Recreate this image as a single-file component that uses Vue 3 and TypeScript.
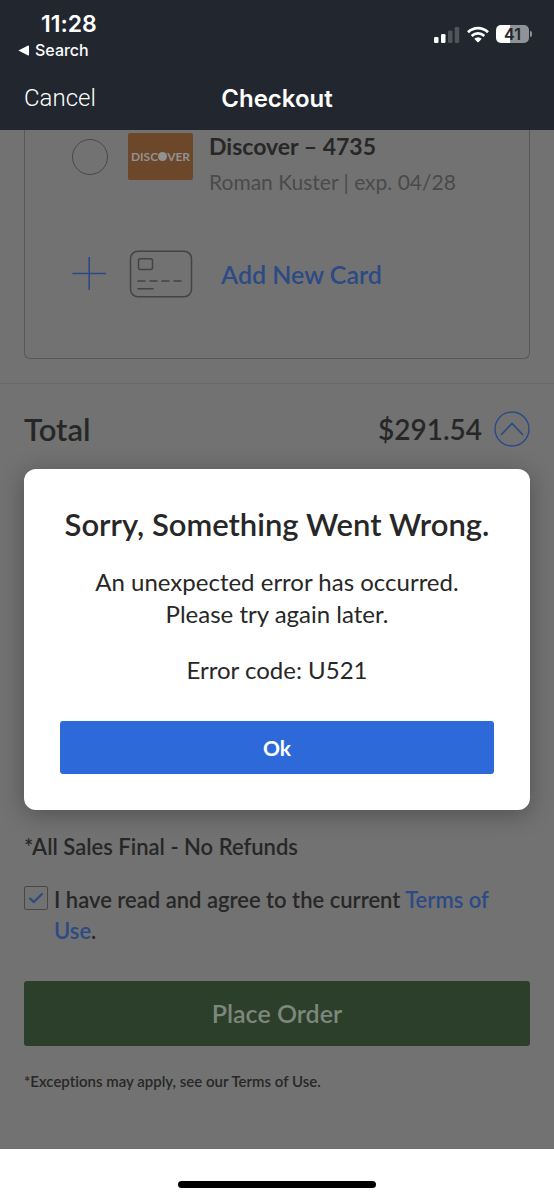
<script setup lang="ts">
import { ref } from 'vue'

const total = '$291.54'
const errorCode = 'U521'
const cardSelected = ref(false)
const agreed = ref(true)
const dialogOpen = ref(true)
</script>

<template>
  <div class="app">
    <header class="top">
      <div class="status">
        <div class="status-left">
          <span class="time">11:28</span>
          <a class="back" href="#">
            <svg width="11" height="11" viewBox="0 0 11 11" aria-hidden="true">
              <path d="M0.4 5.5 L10.2 0.6 Q11 0.4 11 1.2 V9.8 Q11 10.6 10.2 10.4 Z" fill="#fff" />
            </svg>
            <span>Search</span>
          </a>
        </div>
        <div class="status-right">
          <svg width="27" height="17" viewBox="0 0 27 17" aria-hidden="true">
            <rect x="1" y="11" width="4.500" height="6" rx="1.3" fill="#fff" />
            <rect x="8" y="8" width="4.500" height="9" rx="1.3" fill="#fff" />
            <rect x="15" y="4.500" width="4.500" height="12.500" rx="1.300" fill="#50545a" />
            <rect x="21.700" y="1" width="4.500" height="16" rx="1.300" fill="#50545a" />
          </svg>
          <svg width="22" height="17" viewBox="0 0 22 17" aria-hidden="true">
            <g fill="none" stroke="#fff" stroke-width="2.700">
              <path d="M1 6.200 A14.200 14.200 0 0 1 21 6.200" />
              <path d="M4.700 10 A9 9 0 0 1 17.300 10" />
            </g>
            <path d="M7.300 12.800 A5.300 5.300 0 0 1 14.700 12.800 L11.700 16 Q11 16.700 10.300 16 Z" fill="#fff" />
          </svg>
          <span class="battery"><span class="cell">41</span><span class="nub"></span></span>
        </div>
      </div>
      <div class="nav">
        <button class="cancel" type="button">Cancel</button>
        <h1>Checkout</h1>
      </div>
    </header>

    <main class="page">
      <section class="cards">
        <label class="card-row">
          <input v-model="cardSelected" type="radio" name="card" :value="true" />
          <span class="discover">DISC<i></i>VER</span>
          <span class="card-text">
            <strong>Discover – 4735</strong>
            <span>Roman Kuster | exp. 04/28</span>
          </span>
        </label>
        <button class="add-row" type="button">
          <svg width="36" height="36" viewBox="0 0 36 36" aria-hidden="true">
            <path d="M0.500 17.500 H34 M17.200 1 V34" fill="none" stroke="#2c4a84" stroke-width="1.600" />
          </svg>
          <svg width="64" height="48" viewBox="0 0 64 48" aria-hidden="true">
            <g fill="none" stroke="#434343" stroke-width="1.500">
              <rect x="1.500" y="1.200" width="61" height="45.600" rx="7.500" />
              <rect x="9.500" y="8.800" width="14" height="10.700" rx="2" />
              <path d="M9 31 H16 M21 31 H28 M33 31 H40 M45 31 H52 M9 38.800 H24" stroke-linecap="round" />
            </g>
          </svg>
          <span>Add New Card</span>
        </button>
      </section>

      <section class="total">
        <h2>Total</h2>
        <span class="amount">{{ total }}</span>
        <button type="button" aria-label="Show price details">
          <svg width="36" height="36" viewBox="0 0 36 36" aria-hidden="true">
            <g fill="none" stroke="#2c4a84" stroke-width="1.400">
              <circle cx="18" cy="18" r="17" />
              <path d="M7 24 L18 12.500 L29 24" stroke-width="1.700" />
            </g>
          </svg>
        </button>
      </section>

      <section class="agreement">
        <p class="final">*All Sales Final - No Refunds</p>
        <div class="agree">
          <span class="tick">
            <input id="agree" v-model="agreed" type="checkbox" />
            <svg v-if="agreed" width="16" height="12" viewBox="0 0 16 12" aria-hidden="true">
              <path d="M1.500 6 L5.800 10 L14.500 1.500" fill="none" stroke="#2c4a84" stroke-width="2.200" />
            </svg>
          </span>
          <label for="agree">I have read and agree to the current <a href="#">Terms of Use</a>.</label>
        </div>
        <button class="place" type="button">Place Order</button>
        <p class="note">*Exceptions may apply, see our Terms of Use.</p>
      </section>

      <div v-if="dialogOpen" class="layer">
        <div class="dialog" role="alertdialog" aria-modal="true" aria-labelledby="dialog-title">
          <h2 id="dialog-title">Sorry, Something Went Wrong.</h2>
          <p>An unexpected error has occurred.<br />Please try again later.</p>
          <p>Error code: {{ errorCode }}</p>
          <button type="button" @click="dialogOpen = false">Ok</button>
        </div>
      </div>
    </main>

    <footer class="home"><span></span></footer>
  </div>
</template>

<style>
body {
  margin: 0;
}
</style>

<style scoped>
* {
  box-sizing: border-box;
}
.app {
  --ink: #272727;
  --blue: #2c4a84;
  --line: #585858;
  min-height: 100vh;
  display: flex;
  flex-direction: column;
  font-family: Lato, "Noto Sans", sans-serif;
  font-variant-ligatures: none;
  color: var(--ink);
  background: #fff;
}
button {
  font: inherit;
  color: inherit;
  background: none;
  border: 0;
  padding: 0;
  cursor: pointer;
}
h1,
h2,
p {
  margin: 0;
}
svg {
  display: block;
  flex: none;
}
a {
  text-decoration: none;
}
.top {
  background: #22262e;
  color: #fff;
  font-family: Inter, sans-serif;
}
.status {
  display: flex;
  justify-content: space-between;
  height: 66px;
  padding: 10px 22px 0 18px;
}
.status-left {
  display: flex;
  flex-direction: column;
}
.time {
  padding-left: 23px;
  font-size: 23px;
  line-height: 28px;
  font-weight: 600;
}
.back {
  display: flex;
  align-items: center;
  gap: 6px;
  font-size: 16px;
  line-height: 24px;
  font-weight: 500;
  color: #fff;
}
.status-right {
  display: flex;
  align-items: center;
  gap: 7px;
  height: 48px;
}
.battery {
  display: flex;
  align-items: center;
  gap: 1px;
}
.cell {
  width: 33px;
  height: 18px;
  border-radius: 5px;
  background: linear-gradient(90deg, #fff 41%, #909295 41%);
  color: #22262e;
  font-size: 16px;
  line-height: 18px;
  font-weight: 600;
  text-align: center;
}
.nub {
  width: 2px;
  height: 6px;
  border-radius: 0 2px 2px 0;
  background: #909295;
}
.nav {
  display: grid;
  grid-template-columns: 1fr auto 1fr;
  align-items: center;
  height: 64px;
  padding: 0 24px;
}
.cancel {
  justify-self: start;
  font-family: Roboto, sans-serif;
  font-size: 24px;
  font-weight: 300;
}
.nav h1 {
  font-size: 24px;
  font-weight: 600;
}
.page {
  position: relative;
  flex: 1;
  background: #727272;
}
.cards {
  margin: 0 24px;
  padding: 0 47px 60px;
  border: 1px solid var(--line);
  border-top: 0;
  border-radius: 0 0 6px 6px;
}
.card-row {
  display: flex;
  height: 68px;
  padding-top: 3px;
}
.card-row input {
  appearance: none;
  flex: none;
  width: 36px;
  height: 36px;
  margin: 6px 20px 0 0;
  border: 1px solid #484848;
  border-radius: 50%;
}
.discover {
  display: flex;
  flex: none;
  align-items: center;
  justify-content: center;
  width: 65px;
  height: 47px;
  margin-right: 16px;
  border-radius: 2px;
  background: #6d4729;
  color: #929292;
  font-size: 12px;
  font-weight: 700;
}
.discover i {
  width: 9px;
  height: 9px;
  border-radius: 50%;
  background: #929292;
}
.card-text {
  display: flex;
  flex-direction: column;
  gap: 10px;
  font-size: 21px;
  line-height: 26px;
  color: #4a4a4a;
  white-space: nowrap;
}
.card-text strong {
  font-size: 23px;
  color: var(--ink);
}
.add-row {
  display: flex;
  align-items: center;
  width: 100%;
  height: 48px;
  margin-top: 52px;
  font-size: 25px;
  font-weight: 600;
  color: var(--blue);
}
.add-row svg + svg {
  margin: 0 28px 0 21px;
}
.total {
  display: flex;
  align-items: center;
  height: 91px;
  margin-top: 24px;
  padding: 0 24px;
  border-top: 1px solid #686868;
  font-size: 28px;
}
.total h2 {
  flex: 1;
  font-size: 31px;
  font-weight: 600;
}
.amount {
  margin-right: 12px;
  font-weight: 600;
}
.agreement {
  padding: 357px 24px 52px;
  font-size: 22px;
  line-height: 31px;
  font-weight: 600;
}
.agree {
  display: flex;
  gap: 6px;
  margin-top: 22px;
}
.tick {
  display: grid;
  flex: none;
  place-items: center;
  width: 24px;
  height: 28px;
}
.tick > * {
  grid-area: 1 / 1;
}
.tick input {
  appearance: none;
  width: 24px;
  height: 24px;
  margin: 0;
  border: 1px solid #484848;
  border-radius: 2px;
}
.tick svg {
  pointer-events: none;
}
.agree a {
  color: var(--blue);
}
.place {
  width: 100%;
  height: 65px;
  margin-top: 35px;
  border-radius: 3px;
  background: #2c3f2b;
  color: #7d877c;
  font-size: 25px;
}
.note {
  margin-top: 20px;
  font-size: 15px;
}
.layer {
  position: absolute;
  inset: 0;
  display: flex;
  align-items: center;
  justify-content: center;
  padding: 24px;
}
.dialog {
  width: 100%;
  padding: 36px;
  border-radius: 12px;
  background: #fff;
  box-shadow: 0 4px 24px rgba(0, 0, 0, 0.3);
  text-align: center;
  font-size: 24px;
  line-height: 32px;
}
.dialog h2 {
  margin-bottom: 23px;
  font-size: 31px;
  line-height: 38px;
  font-weight: 600;
}
.dialog p {
  margin-bottom: 24px;
}
.dialog button {
  width: 100%;
  height: 53px;
  margin-top: 11px;
  border-radius: 3px;
  background: #2d69d9;
  color: #fff;
  font-size: 21px;
  font-weight: 700;
}
.home {
  display: flex;
  justify-content: center;
  height: 51px;
  padding-top: 32px;
}
.home span {
  width: 198px;
  height: 7px;
  border-radius: 4px;
  background: #000;
}
</style>
